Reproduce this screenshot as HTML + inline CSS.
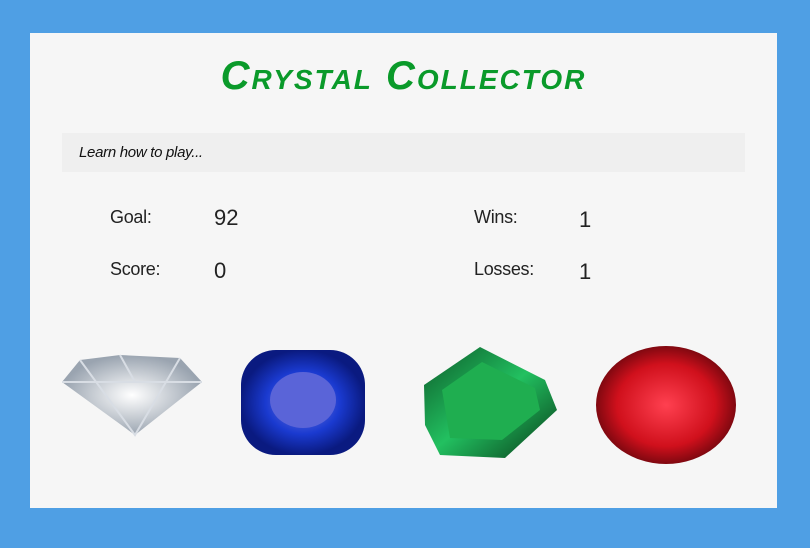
<!DOCTYPE html>
<html><head><style>
body{margin:0;width:810px;height:548px;background:#4f9fe4;position:relative;overflow:hidden;font-family:"Liberation Sans",sans-serif}
.card{position:absolute;left:30px;top:33px;width:747px;height:475px;background:#f6f6f6}
.t{position:absolute;left:0;width:747px;top:21px;text-align:center;font-size:40px;font-weight:bold;font-style:italic;color:#0a9a2a;font-variant:small-caps;letter-spacing:2px}
.bar{position:absolute;left:32px;top:100px;width:683px;height:39px;background:#efefef}
.bar span{position:absolute;left:17px;top:11px;font-size:15px;font-style:italic;color:#111;letter-spacing:-0.3px}
.l{position:absolute;font-size:18px;color:#222;letter-spacing:-0.3px}
.v{position:absolute;font-size:22px;color:#222}
svg{position:absolute}
</style></head><body>
<div class="card">
<div class="t">Crystal Collector</div>
<div class="bar"><span>Learn how to play...</span></div>
<div class="l" style="left:80px;top:174px">Goal:</div><div class="v" style="left:184px;top:172px">92</div>
<div class="l" style="left:444px;top:174px">Wins:</div><div class="v" style="left:549px;top:174px">1</div>
<div class="l" style="left:80px;top:226px">Score:</div><div class="v" style="left:184px;top:225px">0</div>
<div class="l" style="left:444px;top:226px">Losses:</div><div class="v" style="left:549px;top:226px">1</div>
</div>
<svg width="810" height="548" style="left:0;top:0">
<defs>
<radialGradient id="d"><stop offset="0" stop-color="#fff"/><stop offset="1" stop-color="#9aa4b0"/></radialGradient>
<radialGradient id="b"><stop offset="0" stop-color="#7a80e0"/><stop offset="0.6" stop-color="#1a3ad0"/><stop offset="1" stop-color="#0a1a80"/></radialGradient>
<linearGradient id="g" x1="0" y1="0" x2="1" y2="1"><stop offset="0" stop-color="#0d5a2a"/><stop offset="0.5" stop-color="#22c060"/><stop offset="1" stop-color="#083a18"/></linearGradient>
<radialGradient id="r"><stop offset="0" stop-color="#ff4050"/><stop offset="0.7" stop-color="#d0101c"/><stop offset="1" stop-color="#800810"/></radialGradient>
</defs>
<path d="M62,382 L80,360 L120,355 L180,358 L202,382 L135,435 Z" fill="url(#d)"/>
<path d="M62,382 L202,382 M80,360 L135,435 L180,358 M120,355 L135,382" stroke="#d8dde4" stroke-width="2" fill="none"/>
<rect x="241" y="350" width="124" height="105" rx="35" fill="url(#b)"/>
<ellipse cx="303" cy="400" rx="33" ry="28" fill="#5a64d8"/>
<path d="M424,385 L480,347 L545,380 L557,410 L505,458 L440,455 L425,425 Z" fill="url(#g)"/>
<path d="M442,390 L482,362 L535,388 L540,410 L502,440 L450,438 Z" fill="#1fae50"/>
<ellipse cx="666" cy="405" rx="70" ry="59" fill="url(#r)"/>
</svg>
</body></html>
